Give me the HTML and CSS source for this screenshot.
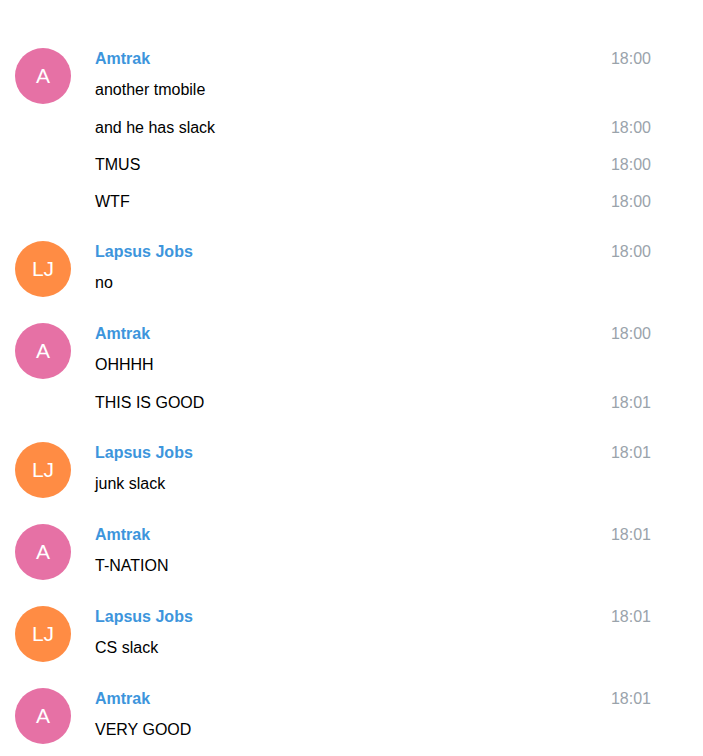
FILE: index.html
```html
<!DOCTYPE html>
<html lang="en">
<head>
    <meta charset="UTF-8">
    <title>Chat history</title>
    <link rel="stylesheet" href="styles.css">
</head>
<body>
    <div class="history">

        <div class="message default">
            <div class="userpic userpic6">A</div>
            <div class="body">
                <div class="head">
                    <div class="from_name">Amtrak</div>
                    <div class="date">18:00</div>
                </div>
                <div class="text">another tmobile</div>
            </div>
        </div>
        <div class="message joined">
            <div class="text">and he has slack</div>
            <div class="date">18:00</div>
        </div>
        <div class="message joined">
            <div class="text">TMUS</div>
            <div class="date">18:00</div>
        </div>
        <div class="message joined">
            <div class="text">WTF</div>
            <div class="date">18:00</div>
        </div>

        <div class="message default">
            <div class="userpic userpic8">LJ</div>
            <div class="body">
                <div class="head">
                    <div class="from_name">Lapsus Jobs</div>
                    <div class="date">18:00</div>
                </div>
                <div class="text">no</div>
            </div>
        </div>

        <div class="message default">
            <div class="userpic userpic6">A</div>
            <div class="body">
                <div class="head">
                    <div class="from_name">Amtrak</div>
                    <div class="date">18:00</div>
                </div>
                <div class="text">OHHHH</div>
            </div>
        </div>
        <div class="message joined">
            <div class="text">THIS IS GOOD</div>
            <div class="date">18:01</div>
        </div>

        <div class="message default">
            <div class="userpic userpic8">LJ</div>
            <div class="body">
                <div class="head">
                    <div class="from_name">Lapsus Jobs</div>
                    <div class="date">18:01</div>
                </div>
                <div class="text">junk slack</div>
            </div>
        </div>

        <div class="message default">
            <div class="userpic userpic6">A</div>
            <div class="body">
                <div class="head">
                    <div class="from_name">Amtrak</div>
                    <div class="date">18:01</div>
                </div>
                <div class="text">T-NATION</div>
            </div>
        </div>

        <div class="message default">
            <div class="userpic userpic8">LJ</div>
            <div class="body">
                <div class="head">
                    <div class="from_name">Lapsus Jobs</div>
                    <div class="date">18:01</div>
                </div>
                <div class="text">CS slack</div>
            </div>
        </div>

        <div class="message default">
            <div class="userpic userpic6">A</div>
            <div class="body">
                <div class="head">
                    <div class="from_name">Amtrak</div>
                    <div class="date">18:01</div>
                </div>
                <div class="text">VERY GOOD</div>
            </div>
        </div>

    </div>
</body>
</html>
```

FILE: styles.css
```css
body {
    margin: 0;
    padding: 0;
    background: #fff;
    color: #000;
    font-family: "Liberation Sans", Arial, sans-serif;
    font-size: 16px;
}

.history {
    padding: 34px 52px 0 15px;
}

.message {
    padding-bottom: 12px;
}

.default {
    display: flex;
    align-items: flex-start;
    padding-top: 14px;
}

.joined {
    display: flex;
    justify-content: space-between;
    padding-left: 80px;
    padding-bottom: 13px;
}

.userpic {
    width: 56px;
    height: 56px;
    flex-shrink: 0;
    border-radius: 50%;
    margin-right: 24px;
    display: flex;
    justify-content: center;
    align-items: center;
    color: #fff;
    font-size: 21px;
}

.userpic6 {
    background: #e671a5;
}

.userpic8 {
    background: #ff8c44;
}

.body {
    flex: 1;
}

.head {
    display: flex;
    justify-content: space-between;
    line-height: 22px;
    padding-bottom: 8px;
}

.from_name {
    color: #3d95dc;
    font-weight: bold;
}

.date {
    color: #9aa3ab;
}

.text {
    line-height: 24px;
}

.joined .date {
    line-height: 24px;
}
```
